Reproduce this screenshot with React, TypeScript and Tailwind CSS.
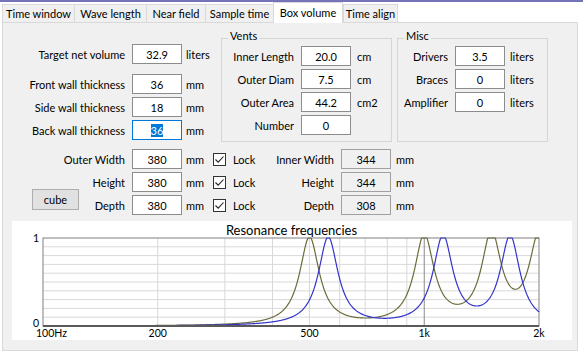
import React from 'react';

const LOG_SPAN = Math.log10(20);
const PLOT = { left: 31, right: 527, top: 17, bottom: 105 };

const xOf = (f: number) => PLOT.left + ((PLOT.right - PLOT.left) * Math.log10(f / 100)) / LOG_SPAN;
const yOf = (v: number) => PLOT.bottom - (PLOT.bottom - PLOT.top) * Math.min(v, 1);

// sum of simple resonance peaks, one per mode
function response(f: number, modes: number[]) {
  return modes.reduce((acc, m) => {
    const d = f / m - m / f;
    return acc + 1 / (1 + 48 * d * d);
  }, 0);
}

function curvePath(modes: number[]) {
  const pts: string[] = [];
  for (let x = PLOT.left; x <= PLOT.right; x += 0.5) {
    const f = 100 * Math.pow(10, ((x - PLOT.left) / (PLOT.right - PLOT.left)) * LOG_SPAN);
    pts.push(`${x.toFixed(1)},${yOf(response(f, modes)).toFixed(2)}`);
  }
  return 'M' + pts.join(' L');
}

const TABS = [
  { label: 'Time window', w: 'w-[72px]' },
  { label: 'Wave length', w: 'w-[72px]' },
  { label: 'Near field', w: 'w-[59px]' },
  { label: 'Sample time', w: 'w-[68px]' },
  { label: 'Box volume', w: 'w-[70px]', active: true },
  { label: 'Time align', w: 'w-[55px]', last: true },
];

function TextBox({ value, focused, readOnly }: { value: string; focused?: boolean; readOnly?: boolean }) {
  const tone = focused
    ? 'border-[#0078d7] bg-white'
    : readOnly
      ? 'border-[#a0a0a0] bg-[#f0f0f0]'
      : 'border-[#8c8c8c] bg-white';
  return (
    <div className={`flex h-[20px] w-[50px] shrink-0 items-center justify-center border ${tone}`}>
      {focused ? <span className="bg-[#0078d7] text-white">{value}</span> : value}
    </div>
  );
}

function Row({
  label,
  value,
  unit,
  labelClass,
  unitClass,
  focused,
}: {
  label: string;
  value: string;
  unit: string;
  labelClass: string;
  unitClass: string;
  focused?: boolean;
}) {
  return (
    <div className="flex h-[20px] items-center">
      <span className={`${labelClass} shrink-0 whitespace-nowrap text-right`}>{label}</span>
      <div className="ml-[7px]">
        <TextBox value={value} focused={focused} />
      </div>
      <span className={unitClass}>{unit}</span>
    </div>
  );
}

function Check() {
  return (
    <span className="flex h-[13px] w-[13px] shrink-0 items-center justify-center border border-[#333] bg-white">
      <svg width="11" height="11" viewBox="0 0 11 11">
        <path d="M1.5 5.5 L4.2 8.2 L9.5 2.5" fill="none" stroke="#222" strokeWidth="1.1" />
      </svg>
    </span>
  );
}

function ResonanceChart() {
  const vLines = [200, 300, 400, 500, 600, 700, 800, 900];
  const hLines = [1, 2, 3, 4, 5, 6, 7, 8, 9];
  const font = "Lato, 'Liberation Sans', sans-serif";
  return (
    <div className="ml-[9px] mt-[6px] h-[119px] w-[560px] bg-white">
      <svg width="560" height="119" viewBox="0 0 560 119">
        <text x="279.5" y="14" textAnchor="middle" fontSize="13" fontFamily={font} fill="#000">
          Resonance frequencies
        </text>
        {hLines.map((i) => (
          <line key={i} x1={PLOT.left} x2={PLOT.right} y1={PLOT.bottom - i * 8.8} y2={PLOT.bottom - i * 8.8} stroke="#d9d9d9" />
        ))}
        {vLines.map((f) => (
          <line key={f} x1={xOf(f)} x2={xOf(f)} y1={PLOT.top} y2={PLOT.bottom} stroke="#d9d9d9" />
        ))}
        <line x1={xOf(1000)} x2={xOf(1000)} y1={PLOT.top} y2={PLOT.bottom} stroke="#8a8a8a" />
        <rect x={PLOT.left} y={PLOT.top} width={PLOT.right - PLOT.left} height={PLOT.bottom - PLOT.top} fill="none" stroke="#808080" />
        <path d={curvePath([500, 1000, 1500, 2000])} fill="none" stroke="#6b6b3a" strokeWidth="1.2" />
        <path d={curvePath([560, 1120, 1680])} fill="none" stroke="#3434cc" strokeWidth="1.2" />
        <line x1={PLOT.left} x2={PLOT.right} y1={PLOT.bottom} y2={PLOT.bottom} stroke="#5a5a5a" strokeWidth="2" />
        <g fontSize="10.5" fontFamily={font} fill="#000">
          <text x="21" y="21">1</text>
          <text x="21" y="105.5">0</text>
          <text x="24" y="116">100Hz</text>
          <text x={xOf(200)} y="116" textAnchor="middle">200</text>
          <text x={xOf(500)} y="116" textAnchor="middle">500</text>
          <text x={xOf(1000)} y="116" textAnchor="middle">1k</text>
          <text x={xOf(2000)} y="116" textAnchor="middle">2k</text>
        </g>
      </svg>
    </div>
  );
}

export default function App() {
  return (
    <div className="flex h-[353px] w-[583px] flex-col bg-white font-['Lato','Liberation_Sans',sans-serif] text-[11px] leading-[13px] text-black">
      <div className="h-[2px] bg-[#7473b8]" />

      {/* tab strip */}
      <div className="relative z-10 flex h-[20px] items-end pl-[2px]">
        {TABS.map((t) =>
          t.active ? (
            <div
              key={t.label}
              className={`${t.w} -mb-px flex h-[21px] justify-center border-x border-t border-[#d9d9d9] bg-white pt-[3px] whitespace-nowrap`}
            >
              {t.label}
            </div>
          ) : (
            <div
              key={t.label}
              className={`${t.w} flex h-[18px] items-center justify-center border-l border-t border-[#d9d9d9] bg-[#f0f0f0] whitespace-nowrap ${t.last ? 'border-r' : ''}`}
            >
              {t.label}
            </div>
          )
        )}
      </div>

      {/* tab page */}
      <div className="ml-[2px] h-[329px] w-[576px] border border-[#d9d9d9] bg-[#f0f0f0]">
        <div className="mt-[7px] flex">
          <div className="flex w-[218px] shrink-0 flex-col pt-[14px]">
            <Row label="Target net volume" value="32.9" unit="liters" labelClass="w-[122px]" unitClass="ml-[4px]" />
            <div className="mt-[10px] flex flex-col gap-[3px]">
              <Row label="Front wall thickness" value="36" unit="mm" labelClass="w-[122px]" unitClass="ml-[4px]" />
              <Row label="Side wall thickness" value="18" unit="mm" labelClass="w-[122px]" unitClass="ml-[4px]" />
              <Row label="Back wall thickness" value="36" unit="mm" labelClass="w-[122px]" unitClass="ml-[4px]" focused />
            </div>
          </div>

          <fieldset className="w-[171px] shrink-0 border border-[#d5d5d5] pb-[6px]">
            <legend className="ml-[6px] px-[2px] pb-[4px] leading-[12px]">Vents</legend>
            <div className="flex flex-col gap-[3px]">
              <Row label="Inner Length" value="20.0" unit="cm" labelClass="w-[72px]" unitClass="ml-[6px]" />
              <Row label="Outer Diam" value="7.5" unit="cm" labelClass="w-[72px]" unitClass="ml-[6px]" />
              <Row label="Outer Area" value="44.2" unit="cm2" labelClass="w-[72px]" unitClass="ml-[6px]" />
              <Row label="Number" value="0" unit="" labelClass="w-[72px]" unitClass="ml-[6px]" />
            </div>
          </fieldset>

          <fieldset className="ml-[5px] w-[151px] shrink-0 border border-[#d5d5d5] pb-[6px]">
            <legend className="ml-[6px] px-[2px] pb-[4px] leading-[12px]">Misc</legend>
            <div className="flex flex-col gap-[3px]">
              <Row label="Drivers" value="3.5" unit="liters" labelClass="w-[50px]" unitClass="ml-[5px]" />
              <Row label="Braces" value="0" unit="liters" labelClass="w-[50px]" unitClass="ml-[5px]" />
              <Row label="Amplifier" value="0" unit="liters" labelClass="w-[50px]" unitClass="ml-[5px]" />
            </div>
          </fieldset>
        </div>

        {/* outer / inner dimensions */}
        <div className="mt-[7px] flex">
          <div className="grid w-[122px] shrink-0 grid-cols-[76px_46px] grid-rows-[20px_20px_20px] gap-y-[3px]">
            <span className="col-span-2 self-center whitespace-nowrap text-right">Outer Width</span>
            <button className="col-start-1 row-span-2 row-start-2 mb-[5px] ml-[29px] h-[21px] w-[47px] self-end border border-[#adadad] bg-[#e1e1e1]">
              cube
            </button>
            <span className="col-start-2 row-start-2 self-center text-right">Height</span>
            <span className="col-start-2 row-start-3 self-center text-right">Depth</span>
          </div>

          <div className="ml-[7px] flex w-[126px] shrink-0 flex-col gap-[3px]">
            {['380', '380', '380'].map((v, i) => (
              <div key={i} className="flex h-[20px] items-center">
                <TextBox value={v} />
                <span className="ml-[4px] w-[27px]">mm</span>
                <Check />
                <span className="ml-[7px]">Lock</span>
              </div>
            ))}
          </div>

          <div className="flex flex-col gap-[3px]">
            {[
              ['Inner Width', '344'],
              ['Height', '344'],
              ['Depth', '308'],
            ].map(([label, v]) => (
              <div key={label} className="flex h-[20px] items-center">
                <span className="w-[76px] whitespace-nowrap text-right">{label}</span>
                <div className="ml-[7px]">
                  <TextBox value={v} readOnly />
                </div>
                <span className="ml-[5px]">mm</span>
              </div>
            ))}
          </div>
        </div>

        <ResonanceChart />
      </div>
    </div>
  );
}
